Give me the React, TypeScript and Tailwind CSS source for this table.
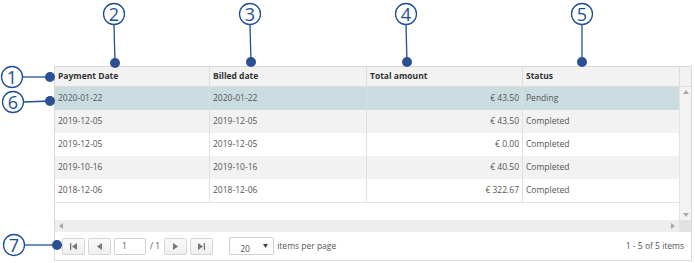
import React from "react";

type Row = { paid: string; billed: string; amount: string; status: string };

const rows: Row[] = [
  { paid: "2020-01-22", billed: "2020-01-22", amount: "€ 43.50", status: "Pending" },
  { paid: "2019-12-05", billed: "2019-12-05", amount: "€ 43.50", status: "Completed" },
  { paid: "2019-12-05", billed: "2019-12-05", amount: "€ 0.00", status: "Completed" },
  { paid: "2019-10-16", billed: "2019-10-16", amount: "€ 40.50", status: "Completed" },
  { paid: "2018-12-06", billed: "2018-12-06", amount: "€ 322.67", status: "Completed" },
];

const rowBg = ["bg-[#c9dde1]", "bg-[#f2f2f2]", "bg-white", "bg-[#f2f2f2]", "bg-white"];

// callout markers: circle, leader line, dot
const callouts = [
  { n: "1", cx: 12, cy: 77, x1: 23, y1: 77, dx: 50, dy: 77 },
  { n: "2", cx: 114, cy: 14, x1: 114, y1: 25, dx: 115, dy: 63 },
  { n: "3", cx: 250, cy: 14, x1: 250, y1: 25, dx: 251, dy: 62 },
  { n: "4", cx: 406, cy: 14, x1: 406, y1: 25, dx: 407, dy: 62 },
  { n: "5", cx: 582, cy: 14, x1: 582, y1: 25, dx: 582, dy: 62 },
  { n: "6", cx: 13, cy: 102, x1: 24, y1: 102, dx: 50, dy: 101 },
  { n: "7", cx: 14, cy: 245, x1: 25, y1: 245, dx: 57, dy: 245 },
];

function PagerButton({ children }: { children: React.ReactNode }) {
  return (
    <div className="flex h-[17px] w-[23px] items-center justify-center rounded-[2px] border border-[#d6d6d6] bg-gradient-to-b from-[#fafafa] to-[#efefef]">
      {children}
    </div>
  );
}

export default function App() {
  return (
    <div className="relative h-[263px] w-[695px] overflow-hidden bg-white font-['Open_Sans',sans-serif]">
      <div className="pl-[54px] pt-[66px]">
        <div className="flex w-[638px] flex-col border border-[#d9d9d9] text-[8.5px]">
          {/* header */}
          <div className="flex h-[20px] border-b border-[#dcdcdc] bg-[#f2f2f2] font-bold text-[#333]">
            <div className="flex w-[155px] items-center border-r border-[#dcdcdc] px-[3px]">Payment Date</div>
            <div className="flex w-[157px] items-center border-r border-[#dcdcdc] px-[3px]">Billed date</div>
            <div className="flex w-[156px] items-center border-r border-[#dcdcdc] px-[3px]">Total amount</div>
            <div className="flex w-[157px] items-center border-r border-[#dcdcdc] px-[3px]">Status</div>
            <div className="flex-1" />
          </div>

          {/* body */}
          <div className="flex h-[133px]">
            <div className="flex w-[624px] flex-col">
              <div className="border-b border-[#e3e3e3]">
                {rows.map((r, i) => (
                  <div key={i} className={`flex h-[23px] text-[#555] ${rowBg[i]}`}>
                    <div className="flex w-[155px] items-center border-r border-[#e0e0e0] px-[3px]">{r.paid}</div>
                    <div className="flex w-[157px] items-center border-r border-[#e0e0e0] px-[3px]">{r.billed}</div>
                    <div className="flex w-[156px] items-center justify-end border-r border-[#e0e0e0] px-[3px]">{r.amount}</div>
                    <div className="flex w-[156px] items-center px-[3px]">{r.status}</div>
                  </div>
                ))}
              </div>
            </div>
            <div className="flex flex-1 flex-col items-center justify-between border-l border-[#e3e3e3] bg-[#f3f3f3] py-[3px]">
              <svg width="6" height="4" viewBox="0 0 6 4"><path d="M0 4 L3 0 L6 4 Z" fill="#a8a8a8" /></svg>
              <svg width="6" height="4" viewBox="0 0 6 4"><path d="M0 0 L3 4 L6 0 Z" fill="#a8a8a8" /></svg>
            </div>
          </div>

          {/* horizontal scrollbar */}
          <div className="flex h-[12px]">
            <div className="flex flex-1 items-center justify-between bg-[#eeeeee] px-[4px]">
              <svg width="4" height="6" viewBox="0 0 4 6"><path d="M4 0 L0 3 L4 6 Z" fill="#a8a8a8" /></svg>
              <svg width="4" height="6" viewBox="0 0 4 6"><path d="M0 0 L4 3 L0 6 Z" fill="#a8a8a8" /></svg>
            </div>
            <div className="w-[12px] bg-[#e2e2e2]" />
          </div>

          {/* pager */}
          <div className="flex h-[28px] items-center pl-[7px] pr-[7px] text-[#555]">
            <div className="flex items-center gap-[3px]">
              <PagerButton>
                <svg width="7" height="7" viewBox="0 0 7 7"><rect x="0" y="0" width="1.3" height="7" fill="#777" /><path d="M7 0 L2 3.5 L7 7 Z" fill="#777" /></svg>
              </PagerButton>
              <PagerButton>
                <svg width="5" height="7" viewBox="0 0 5 7"><path d="M5 0 L0 3.5 L5 7 Z" fill="#777" /></svg>
              </PagerButton>
              <div className="flex h-[17px] w-[32px] items-center rounded-[2px] border border-[#d0d0d0] bg-white pl-[7px]">1</div>
              <span className="mx-[1px]">/ 1</span>
              <PagerButton>
                <svg width="5" height="7" viewBox="0 0 5 7"><path d="M0 0 L5 3.5 L0 7 Z" fill="#777" /></svg>
              </PagerButton>
              <PagerButton>
                <svg width="7" height="7" viewBox="0 0 7 7"><path d="M0 0 L5 3.5 L0 7 Z" fill="#777" /><rect x="5.7" y="0" width="1.3" height="7" fill="#777" /></svg>
              </PagerButton>
            </div>
            <div className="ml-[16px] flex h-[18px] w-[45px] items-center justify-between overflow-hidden rounded-[2px] border border-[#d0d0d0] bg-white pl-[10px] pr-[5px]">
              <span className="pt-[7px]">20</span>
              <svg width="5" height="4" viewBox="0 0 5 4"><path d="M0 0 L2.5 4 L5 0 Z" fill="#444" /></svg>
            </div>
            <span className="ml-[3px]">items per page</span>
            <span className="ml-auto">1 - 5 of 5 items</span>
          </div>
        </div>
      </div>

      {/* annotation overlay */}
      <svg className="pointer-events-none absolute inset-0" width="695" height="263" viewBox="0 0 695 263">
        {callouts.map((c) => (
          <g key={c.n}>
            <line x1={c.x1} y1={c.y1} x2={c.dx} y2={c.dy} stroke="#1f4f98" strokeWidth="1.3" />
            <circle cx={c.cx} cy={c.cy} r="10.5" fill="white" stroke="#1f4f98" strokeWidth="1.3" />
            <text
              x={c.cx}
              y={c.cy + 6.5}
              textAnchor="middle"
              fontSize="18"
              fill="#1f4f98"
              fontFamily="'Open Sans', sans-serif"
            >
              {c.n}
            </text>
            <circle cx={c.dx} cy={c.dy} r="5" fill="#2b5194" />
          </g>
        ))}
      </svg>
    </div>
  );
}
